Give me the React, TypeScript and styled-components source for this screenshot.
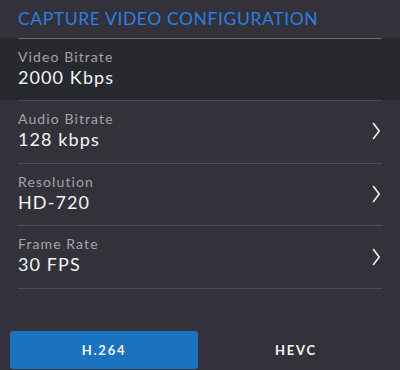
import React from 'react';
import styled, { createGlobalStyle } from 'styled-components';

const GlobalStyle = createGlobalStyle`
  html, body {
    margin: 0;
    padding: 0;
    background: #33323a;
  }
  body {
    font-family: Lato, "Open Sans", sans-serif;
  }
`;

interface Setting {
  label: string;
  value: string;
  editable: boolean;
}

const settings: Setting[] = [
  { label: 'Video Bitrate', value: '2000 Kbps', editable: false },
  { label: 'Audio Bitrate', value: '128 kbps', editable: true },
  { label: 'Resolution', value: 'HD-720', editable: true },
  { label: 'Frame Rate', value: '30 FPS', editable: true },
];

const Chevron = () => (
  <svg width="9" height="18" viewBox="0 0 9 18" fill="none">
    <path d="M1.5 1.5 L7.2 9 L1.5 16.5" stroke="#f2f2f4" strokeWidth="1.6" strokeLinecap="round" strokeLinejoin="round" />
  </svg>
);

const App = () => {
  return (
    <Screen>
      <GlobalStyle />
      <Title>CAPTURE VIDEO CONFIGURATION</Title>
      <List>
        {settings.map((s) => (
          <Row key={s.label} readOnly={!s.editable}>
            <RowInner>
              <RowText>
                <Label>{s.label}</Label>
                <Value>{s.value}</Value>
              </RowText>
              {s.editable && <Chevron />}
            </RowInner>
          </Row>
        ))}
      </List>
      <Codecs>
        <CodecButton active>H.264</CodecButton>
        <CodecButton>HEVC</CodecButton>
      </Codecs>
    </Screen>
  );
};

const Screen = styled.div`
  width: 400px;
  height: 370px;
  display: flex;
  flex-direction: column;
  background: #33323a;
  overflow: hidden;
`;

const Title = styled.div`
  height: 38px;
  box-sizing: border-box;
  padding: 9px 18px 0;
  color: #2f7ce0;
  font-family: Lato, sans-serif;
  font-size: 17.5px;
  letter-spacing: 0.6px;
  line-height: 20px;
`;

const List = styled.div`
  display: flex;
  flex-direction: column;
`;

const Row = styled.div<{ readOnly?: boolean }>`
  height: ${(p) => (p.readOnly ? '62px' : '62.7px')};
  background: ${(p) => (p.readOnly ? '#28282f' : 'transparent')};
  padding: 0 18px;
  position: relative;
  &:before {
    content: '';
    position: absolute;
    left: 18px;
    right: 18px;
    top: 0;
    height: 1px;
    background: ${(p) => (p.readOnly ? '#66656d' : '#4c4b53')};
  }
  &:last-child:after {
    content: '';
    position: absolute;
    left: 18px;
    right: 18px;
    bottom: -1px;
    height: 1px;
    background: #4c4b53;
  }
`;

const RowInner = styled.div`
  height: 100%;
  display: flex;
  align-items: center;
  justify-content: space-between;
  padding-right: 1px;
`;

const RowText = styled.div`
  display: flex;
  flex-direction: column;
  margin-top: -3px;
`;

const Label = styled.div`
  color: #a3a2aa;
  font-size: 14px;
  letter-spacing: 1.1px;
  line-height: 18px;
`;

const Value = styled.div`
  color: #f4f4f6;
  font-size: 18px;
  letter-spacing: 1.1px;
  line-height: 22px;
`;

const Codecs = styled.div`
  margin-top: auto;
  display: flex;
  gap: 4px;
  padding: 0 10px 1px;
`;

const CodecButton = styled.button<{ active?: boolean }>`
  flex: 1;
  height: 38px;
  border: none;
  border-radius: 3px;
  background: ${(p) => (p.active ? '#1b72be' : 'transparent')};
  color: #f4f4f6;
  font-family: Lato, sans-serif;
  font-weight: 700;
  font-size: 13px;
  letter-spacing: 1.8px;
`;

export default App;
